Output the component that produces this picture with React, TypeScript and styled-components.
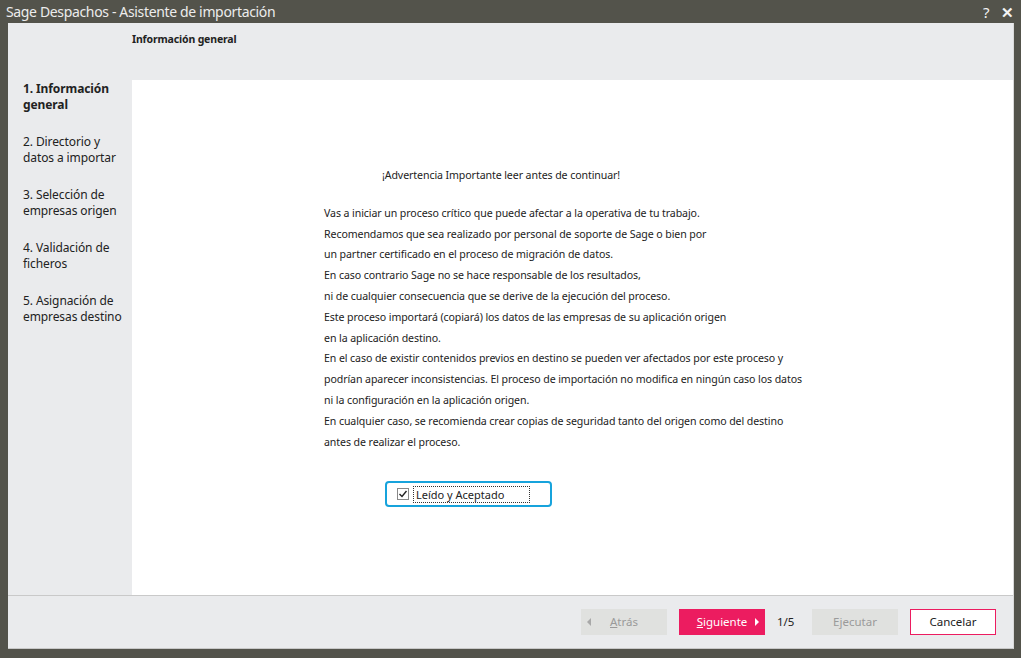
import * as React from 'react'
import styled, { createGlobalStyle } from 'styled-components'

const GlobalStyle = createGlobalStyle`
    html, body {
        margin: 0;
        padding: 0;
        background: #53534b;
        font-family: "Noto Sans", "Open Sans", sans-serif;
    }
`

const Window = styled.div`
    width: 1021px;
    height: 658px;
    display: flex;
    flex-direction: column;
    background: #53534b;
    overflow: hidden;
`

const TitleBar = styled.div`
    height: 23px;
    display: flex;
    align-items: center;
    padding: 0 8px 0 6px;
    color: #ececec;
    font-size: 14px;
    letter-spacing: -0.35px;
`

const Title = styled.div`
    flex: 1;
    white-space: nowrap;
`

const TitleButton = styled.span<{ $bold?: boolean }>`
    color: #f4f4f4;
    font-size: 15px;
    margin-left: 9px;
    width: 12px;
    text-align: center;
    font-weight: ${(p) => (p.$bold ? 700 : 400)};
`

const Client = styled.div`
    flex: 1;
    margin: 0 7px 9px 8px;
    display: flex;
    flex-direction: column;
    background: #eaebed;
    border-right: 1px solid #d9d9d9;
    border-bottom: 1px solid #c8c8c8;
`

const Header = styled.div`
    height: 57px;
    box-sizing: border-box;
    padding: 9px 0 0 124px;
    font-size: 10.5px;
    letter-spacing: -0.15px;
    font-weight: 700;
    color: #222;
`

const Body = styled.div`
    flex: 1;
    display: flex;
`

const Sidebar = styled.div`
    width: 124px;
    display: flex;
    flex-direction: column;
    gap: 21px;
    padding: 1px 0 0 15px;
    box-sizing: border-box;
`

const Step = styled.div<{ $active?: boolean }>`
    font-size: 12px;
    line-height: 16px;
    letter-spacing: -0.1px;
    color: #222;
    font-weight: ${(p) => (p.$active ? 700 : 400)};
`

const Content = styled.div`
    flex: 1;
    background: #ffffff;
    padding: 85px 0 0 192px;
`

const Warning = styled.div`
    font-size: 10.6px;
    letter-spacing: -0.09px;
    line-height: 20.8px;
    color: #222;
    padding-left: 58px;
    margin-bottom: 17px;
`

const Paragraph = styled.div`
    font-size: 10.6px;
    letter-spacing: -0.09px;
    line-height: 20.8px;
    color: #222;
`

const AcceptBox = styled.div`
    margin: 29px 0 0 61px;
    width: 167px;
    height: 26px;
    box-sizing: border-box;
    border: 2px solid #17a3dc;
    border-radius: 4px;
    display: flex;
    align-items: center;
    padding-left: 10px;
    gap: 4px;
`

const Check = styled.span`
    width: 12px;
    height: 12px;
    box-sizing: border-box;
    border: 1px solid #888;
    background: #fff;
    display: flex;
    align-items: center;
    justify-content: center;
`

const CheckLabel = styled.span`
    font-size: 11px;
    color: #222;
    border: 1px dotted #333;
    padding: 0 2px;
    width: 117px;
    box-sizing: border-box;
    line-height: 15px;
`

const Footer = styled.div`
    height: 53px;
    border-top: 1px solid #c9c9c9;
    display: flex;
    align-items: center;
    justify-content: flex-end;
    padding: 0 17px 1px 0;
    box-sizing: border-box;
`

type Variant = 'disabled' | 'primary' | 'outline'

const Button = styled.div<{ $variant: Variant }>`
    width: 86px;
    height: 26px;
    box-sizing: border-box;
    display: flex;
    align-items: center;
    justify-content: center;
    position: relative;
    font-size: 11.5px;
    margin-left: 12px;
    background: ${(p) => (p.$variant === 'primary' ? '#ec1c60' : p.$variant === 'outline' ? '#ffffff' : '#e0e1df')};
    color: ${(p) => (p.$variant === 'primary' ? '#ffffff' : p.$variant === 'outline' ? '#222' : '#9a9a9a')};
    border: ${(p) => (p.$variant === 'outline' ? '1px solid #ec1c60' : 'none')};
    u {
        text-decoration: underline;
    }
`

const Arrow = styled.span<{ $side: 'left' | 'right'; $color: string }>`
    position: absolute;
    top: 9px;
    ${(p) => (p.$side === 'left' ? 'left: 6px;' : 'right: 6px;')}
    width: 0;
    height: 0;
    border-top: 4px solid transparent;
    border-bottom: 4px solid transparent;
    ${(p) => (p.$side === 'left' ? `border-right: 4px solid ${p.$color};` : `border-left: 4px solid ${p.$color};`)}
`

const Pager = styled.span`
    font-size: 11.5px;
    color: #222;
    margin-left: 12px;
    width: 23px;
`

const stepLines: string[][] = [
    ['1. Información', 'general'],
    ['2. Directorio y', 'datos a importar'],
    ['3. Selección de', 'empresas origen'],
    ['4. Validación de', 'ficheros'],
    ['5. Asignación de', 'empresas destino'],
]

const lines = [
    'Vas a iniciar un proceso crítico que puede afectar a la operativa de tu trabajo.',
    'Recomendamos que sea realizado por personal de soporte de Sage o bien por',
    'un partner certificado en el proceso de migración de datos.',
    'En caso contrario Sage no se hace responsable de los resultados,',
    'ni de cualquier consecuencia que se derive de la ejecución del proceso.',
    'Este proceso importará (copiará) los datos de las empresas de su aplicación origen',
    'en la aplicación destino.',
    'En el caso de existir contenidos previos en destino se pueden ver afectados por este proceso y',
    'podrían aparecer inconsistencias. El proceso de importación no modifica en ningún caso los datos',
    'ni la configuración en la aplicación origen.',
    'En cualquier caso, se recomienda crear copias de seguridad tanto del origen como del destino',
    'antes de realizar el proceso.',
]

const App = () => {
    return (
        <Window>
            <GlobalStyle />
            <TitleBar>
                <Title>Sage Despachos - Asistente de importación</Title>
                <TitleButton>?</TitleButton>
                <TitleButton $bold>✕</TitleButton>
            </TitleBar>
            <Client>
                <Header>Información general</Header>
                <Body>
                    <Sidebar>
                        {stepLines.map((s, i) => (
                            <Step key={s[0]} $active={i === 0}>
                                {s[0]}
                                <br />
                                {s[1]}
                            </Step>
                        ))}
                    </Sidebar>
                    <Content>
                        <Warning>¡Advertencia Importante leer antes de continuar!</Warning>
                        {lines.map((l) => (
                            <Paragraph key={l}>{l}</Paragraph>
                        ))}
                        <AcceptBox>
                            <Check>
                                <svg width="10" height="10" viewBox="0 0 10 10">
                                    <path d="M1.5 5 L4 7.5 L8.5 2" fill="none" stroke="#222" strokeWidth="1.4" />
                                </svg>
                            </Check>
                            <CheckLabel>Leído y Aceptado</CheckLabel>
                        </AcceptBox>
                    </Content>
                </Body>
                <Footer>
                    <Button $variant="disabled">
                        <Arrow $side="left" $color="#a8a8a8" />
                        <span><u>A</u>trás</span>
                    </Button>
                    <Button $variant="primary">
                        <span><u>S</u>iguiente</span>
                        <Arrow $side="right" $color="#ffffff" />
                    </Button>
                    <Pager>1/5</Pager>
                    <Button $variant="disabled">Ejecutar</Button>
                    <Button $variant="outline">Cancelar</Button>
                </Footer>
            </Client>
        </Window>
    )
}

export default App
